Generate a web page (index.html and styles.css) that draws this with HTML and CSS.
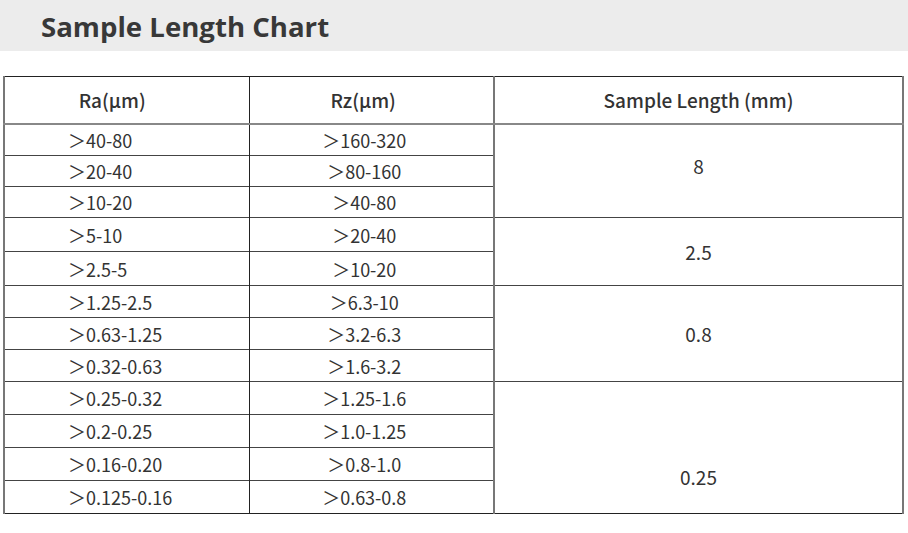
FILE: index.html
```html
<!DOCTYPE html>
<html>
<head>
<meta charset="utf-8">
<link rel="stylesheet" href="styles.css">
</head>
<body>
<header class="band"><h1 class="title">Sample Length Chart</h1></header>
<table class="chart">
  <colgroup><col class="c1"><col class="c2"><col class="c3"></colgroup>
  <thead>
    <tr><th class="h1">Ra(μm)</th><th class="h2">Rz(μm)</th><th class="h3">Sample Length (mm)</th></tr>
  </thead>
  <tbody>
    <tr class="g1"><td class="ra">＞40-80</td><td class="rz">＞160-320</td><td class="len top" rowspan="3">8</td></tr>
    <tr class="g1"><td class="ra">＞20-40</td><td class="rz">＞80-160</td></tr>
    <tr class="g1"><td class="ra">＞10-20</td><td class="rz">＞40-80</td></tr>
    <tr class="g2"><td class="ra">＞5-10</td><td class="rz">＞20-40</td><td class="len" rowspan="2">2.5</td></tr>
    <tr class="g2"><td class="ra">＞2.5-5</td><td class="rz">＞10-20</td></tr>
    <tr class="g3"><td class="ra">＞1.25-2.5</td><td class="rz">＞6.3-10</td><td class="len" rowspan="3">0.8</td></tr>
    <tr class="g3"><td class="ra">＞0.63-1.25</td><td class="rz">＞3.2-6.3</td></tr>
    <tr class="g3"><td class="ra">＞0.32-0.63</td><td class="rz">＞1.6-3.2</td></tr>
    <tr class="g4"><td class="ra">＞0.25-0.32</td><td class="rz">＞1.25-1.6</td><td class="len low" rowspan="4">0.25</td></tr>
    <tr class="g4"><td class="ra">＞0.2-0.25</td><td class="rz">＞1.0-1.25</td></tr>
    <tr class="g4"><td class="ra">＞0.16-0.20</td><td class="rz">＞0.8-1.0</td></tr>
    <tr class="g4"><td class="ra">＞0.125-0.16</td><td class="rz">＞0.63-0.8</td></tr>
  </tbody>
</table>
</body>
</html>
```
FILE: styles.css
```css
html, body { margin: 0; padding: 0; background: #fff; }
body { font-family: "Noto Sans CJK SC", "Noto Sans", sans-serif; color: #333; }
.band { background: #ececec; height: 51px; display: flex; align-items: center; }
.title {
  margin: 0 0 0 41px;
  font-family: "Open Sans", "Noto Sans", sans-serif;
  font-weight: 700; font-size: 27.6px; color: #383838;
  line-height: 1;
  padding-top: 2px;
}
.chart {
  margin: 25px 0 0 3px;
  width: 899px;
  border-collapse: collapse;
  table-layout: fixed;
  font-size: 18px;
  border-top: 1px solid #222;
  border-bottom: 1px solid #222;
  border-left: 2px solid #777;
  border-right: 2px solid #777;
}
.c1 { width: 245px; }
.c2 { width: 245px; }
.c3 { width: 409px; }
th, td { padding: 0; line-height: 24px; }
th {
  height: 46px; font-weight: 500; font-size: 19px; color: #333;
  border-bottom: 2px solid #888;
}
td { border-top: 1px solid #444; }
.g1 td { height: 30px; }
.g2 td { height: 33px; }
.g3 td { height: 31px; }
.g4 td { height: 32px; }
tbody tr:first-child td { border-top: none; }
th.h1, td.ra { border-right: 1px solid #222; }
th.h2, td.rz { border-right: 2px solid #777; }
.h1 { text-align: center; padding-right: 29px; }
.h2 { text-align: center; padding-right: 16px; }
.h3 { text-align: center; }
.ra { text-align: left; padding-left: 63px; }
.rz { text-align: center; padding-right: 14px; }
.len { text-align: center; vertical-align: middle; font-size: 19px; }
.len.top { padding-bottom: 10px; }
.len.low { vertical-align: bottom; padding-bottom: 24px; }
```
